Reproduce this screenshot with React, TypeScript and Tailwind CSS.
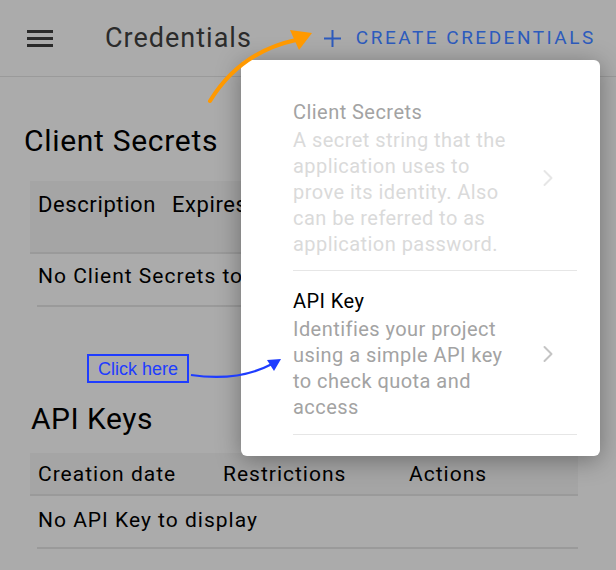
import React from "react"

/* ================= Data ================= */
type MenuItem = {
  title: string
  desc: string
  disabled?: boolean
}

const menuItems: MenuItem[] = [
  {
    title: "Client Secrets",
    desc: "A secret string that the application uses to prove its identity. Also can be referred to as application password.",
    disabled: true,
  },
  {
    title: "API Key",
    desc: "Identifies your project using a simple API key to check quota and access",
  },
]

const Chevron = ({ light }: { light?: boolean }) => (
  <svg width="12" height="18" viewBox="0 0 12 18" fill="none">
    <path
      d="M2.5 2 L9.5 9 L2.5 16"
      stroke={light ? "#e6e6e6" : "#c4c4c4"}
      strokeWidth="2"
      strokeLinecap="round"
      strokeLinejoin="round"
    />
  </svg>
)

export default function App() {
  return (
    <div className="relative w-[616px] h-[570px] overflow-hidden bg-[#ababab] font-['Roboto',sans-serif] text-black">
      {/* Header */}
      <div className="h-[77px] border-b border-[#9a9a9a] flex items-center pl-[27px] pt-[1px] whitespace-nowrap">
        <div className="flex flex-col gap-[4px] w-[26px] shrink-0">
          <span className="h-[3px] bg-[#2a2a2a]" />
          <span className="h-[3px] bg-[#2a2a2a]" />
          <span className="h-[3px] bg-[#2a2a2a]" />
        </div>
        <h1 className="ml-[52px] shrink-0 text-[27px] tracking-[1px] text-[#2b2b2b]">Credentials</h1>
        <button className="ml-[71px] shrink-0 flex items-center gap-[14px] text-[#2d5bbd]">
          <svg width="19" height="19" viewBox="0 0 19 19">
            <path d="M9.5 1 V18 M1 9.5 H18" stroke="#2d5bbd" strokeWidth="2" />
          </svg>
          <span className="text-[19px] tracking-[2.5px]">CREATE CREDENTIALS</span>
        </button>
      </div>

      {/* Client Secrets */}
      <h2 className="ml-[24px] mt-[48px] text-[30px] leading-[32px] tracking-[0.7px]">Client Secrets</h2>
      <div className="ml-[30px] mr-[38px] mt-[24px]">
        <div className="h-[73px] bg-[#a5a5a5] border-b-2 border-[#9a9a9a] flex gap-[16px] px-[8px] pt-[13px] text-[22px] leading-[22px] tracking-[0.6px]">
          <span>Description</span>
          <span>Expires on</span>
        </div>
        <div className="ml-[7px] h-[53px] border-b-2 border-[#9a9a9a] flex items-center pb-[6px] pl-[1px] text-[21px] tracking-[1px]">
          No Client Secrets to display
        </div>
      </div>

      {/* API Keys */}
      <h2 className="ml-[31px] mt-[96px] text-[30px] leading-[32px] tracking-[0.5px]">API Keys</h2>
      <div className="ml-[30px] mr-[38px] mt-[18px]">
        <div className="h-[43px] bg-[#a5a5a5] border-b-2 border-[#9a9a9a] grid grid-cols-[185px_186px_1fr] items-center px-[8px] pt-[3px] text-[21px] tracking-[1px]">
          <span>Creation date</span>
          <span>Restrictions</span>
          <span>Actions</span>
        </div>
        <div className="ml-[7px] h-[53px] border-b-2 border-[#9a9a9a] flex items-center pb-[2px] pl-[1px] text-[21px] tracking-[1px]">
          No API Key to display
        </div>
      </div>

      {/* Dropdown menu */}
      <div className="absolute left-[241px] top-[60px] w-[359px] h-[396px] bg-white rounded-[6px] shadow-[0_4px_24px_rgba(0,0,0,0.35)] pl-[52px] pr-[23px] pt-[38px]">
        {menuItems.map((item, i) => (
          <div
            key={item.title}
            className={`flex items-center justify-between border-b border-[#e6e6e6] pt-[1px] mb-[16px] ${
              i === 0 ? "pb-[13px]" : "pb-[14px]"
            }`}
          >
            <div className="w-[224px] text-[20px] leading-[26px] tracking-[0.45px]">
              <div className={item.disabled ? "text-[#a3a3a3]" : "text-black"}>{item.title}</div>
              <div className={`mt-[2px] ${item.disabled ? "text-[#dadada]" : "text-[#a3a3a3]"}`}>
                {item.desc}
              </div>
            </div>
            <div className="mr-[23px]">
              <Chevron light={item.disabled} />
            </div>
          </div>
        ))}
      </div>

      {/* Annotation arrows */}
      <svg className="absolute left-0 top-0" width="616" height="570" viewBox="0 0 616 570">
        <path d="M210 101 Q 240 52 296 40" stroke="#ff9900" strokeWidth="4" fill="none" strokeLinecap="round" />
        <path d="M312 33 L290 30 L299 50 Z" fill="#ff9900" />
        <path d="M191 375 Q 238 382 272 364" stroke="#1e3cff" strokeWidth="2.2" fill="none" />
        <path d="M281 359 L267 360 L274 371 Z" fill="#1e3cff" />
      </svg>

      {/* Annotation: Click here */}
      <div className="absolute left-[87px] top-[354px] w-[102px] h-[29px] border-2 border-[#1e3cff] flex items-center justify-center pt-[1px] font-['Liberation_Sans',sans-serif] text-[18px] text-[#1e3cff]">
        Click here
      </div>
    </div>
  )
}
